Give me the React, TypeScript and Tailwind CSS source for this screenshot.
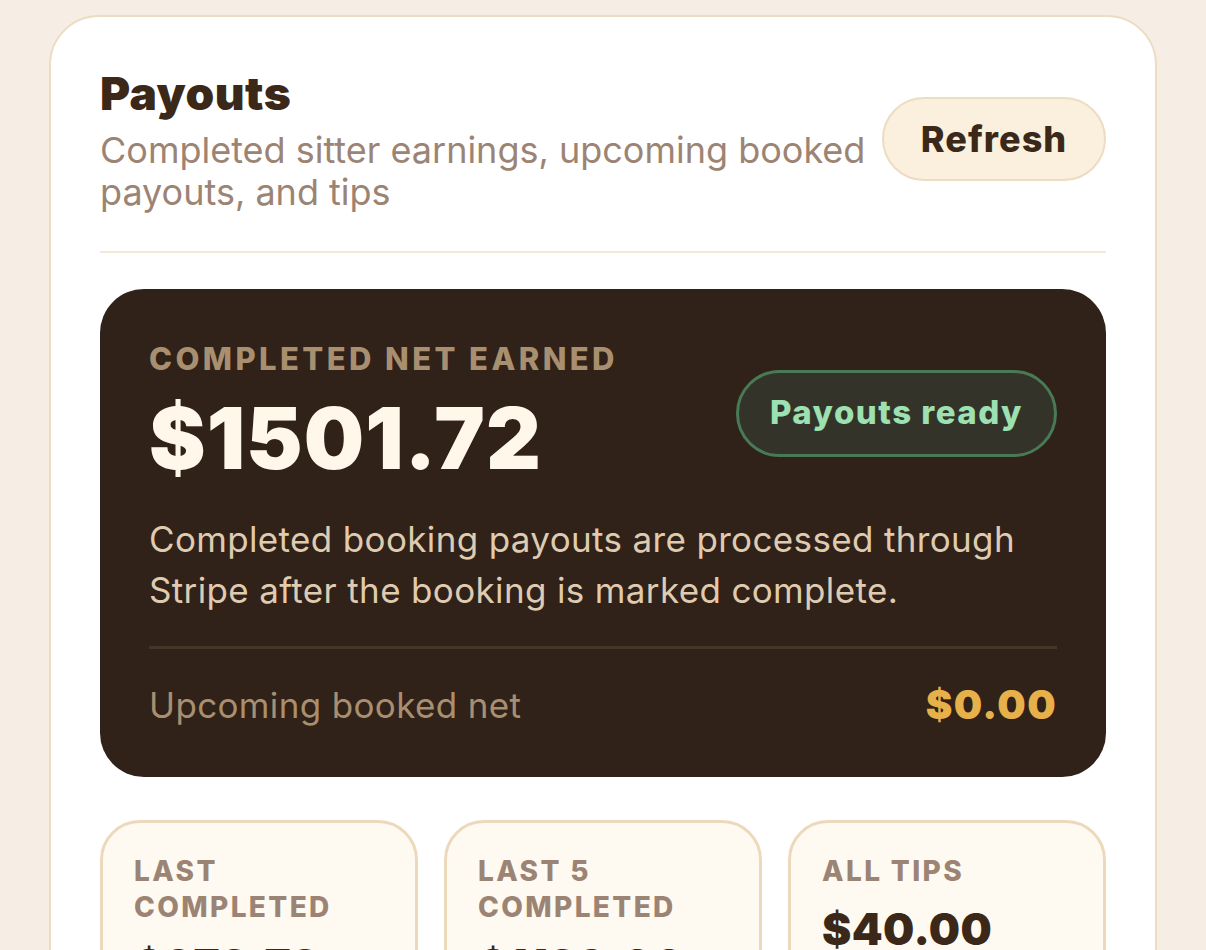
import React from 'react';

const stats = [
  { label: 'Last completed', value: '$372.72' },
  { label: 'Last 5 completed', value: '$1129.00' },
  { label: 'All tips', value: '$40.00' },
];

export default function App() {
  return (
    <div className="min-h-screen bg-[#f6eee4] px-[49px] pt-[15px] font-['Inter',sans-serif]">
      <div className="rounded-[50px] border-2 border-[#ecdcc2] bg-white px-[49px] pt-[51px] pb-12">
        <div className="flex items-start justify-between gap-3 border-b-2 border-[#f4e9d6] pb-[38px]">
          <div>
            <h1 className="text-[46px] font-black leading-[1.1] tracking-[0.01em] text-[#3b2819]">Payouts</h1>
            <p className="mt-[10px] text-[36px] leading-[42px] text-[#9c8474]">
              Completed sitter earnings, upcoming booked payouts, and tips
            </p>
          </div>
          <button className="mt-[29px] h-[84px] w-[224px] shrink-0 rounded-full border-2 border-[#ecdcc2] bg-[#faf0dd] text-[36px] font-extrabold tracking-[0.03em] text-[#3b2819]">
            Refresh
          </button>
        </div>

        <div className="mt-[36px] rounded-[44px] bg-[#302119] px-[49px] pt-[54px] pb-[42px]">
          <div className="flex items-start justify-between">
            <div>
              <div className="text-[31px] font-extrabold uppercase leading-none tracking-[0.11em] text-[#a88f6f]">
                Completed net earned
              </div>
              <div className="mt-[22px] text-[85px] font-black leading-none tracking-[0.012em] text-[#fff8ea]">
                $1501.72
              </div>
            </div>
            <div className="mt-[27px] flex h-[87px] items-center rounded-full border-[3px] border-[#487a55] bg-[#33332a] px-[31px] text-[33px] font-extrabold tracking-[0.045em] text-[#9de0b1]">
              Payouts ready
            </div>
          </div>
          <p className="mt-[33px] text-[35px] leading-[51px] tracking-[0.01em] text-[#dfcbb0]">
            Completed booking payouts are processed through Stripe after the booking is marked complete.
          </p>
          <div className="mt-[30px] flex items-center justify-between border-t-[3px] border-[#463629] pt-[26px]">
            <span className="text-[35px] leading-[60px] tracking-[0.01em] text-[#a88f6f]">Upcoming booked net</span>
            <span className="text-[40px] font-black leading-[60px] tracking-[0.035em] text-[#e6b14b]">$0.00</span>
          </div>
        </div>

        <div className="mt-[43px] grid grid-cols-3 gap-[26px]">
          {stats.map((s) => (
            <div key={s.label} className="rounded-[40px] border-[3px] border-[#ecd9bc] bg-[#fffaf1] px-[31px] pt-[30px] pb-[34px]">
              <div className="text-[28px] font-extrabold uppercase leading-[36px] tracking-[0.085em] text-[#9c8474]">
                {s.label}
              </div>
              <div className="mt-[18px] text-[44px] font-black leading-none tracking-[0.01em] text-[#3b2819]">{s.value}</div>
            </div>
          ))}
        </div>
      </div>
    </div>
  );
}
